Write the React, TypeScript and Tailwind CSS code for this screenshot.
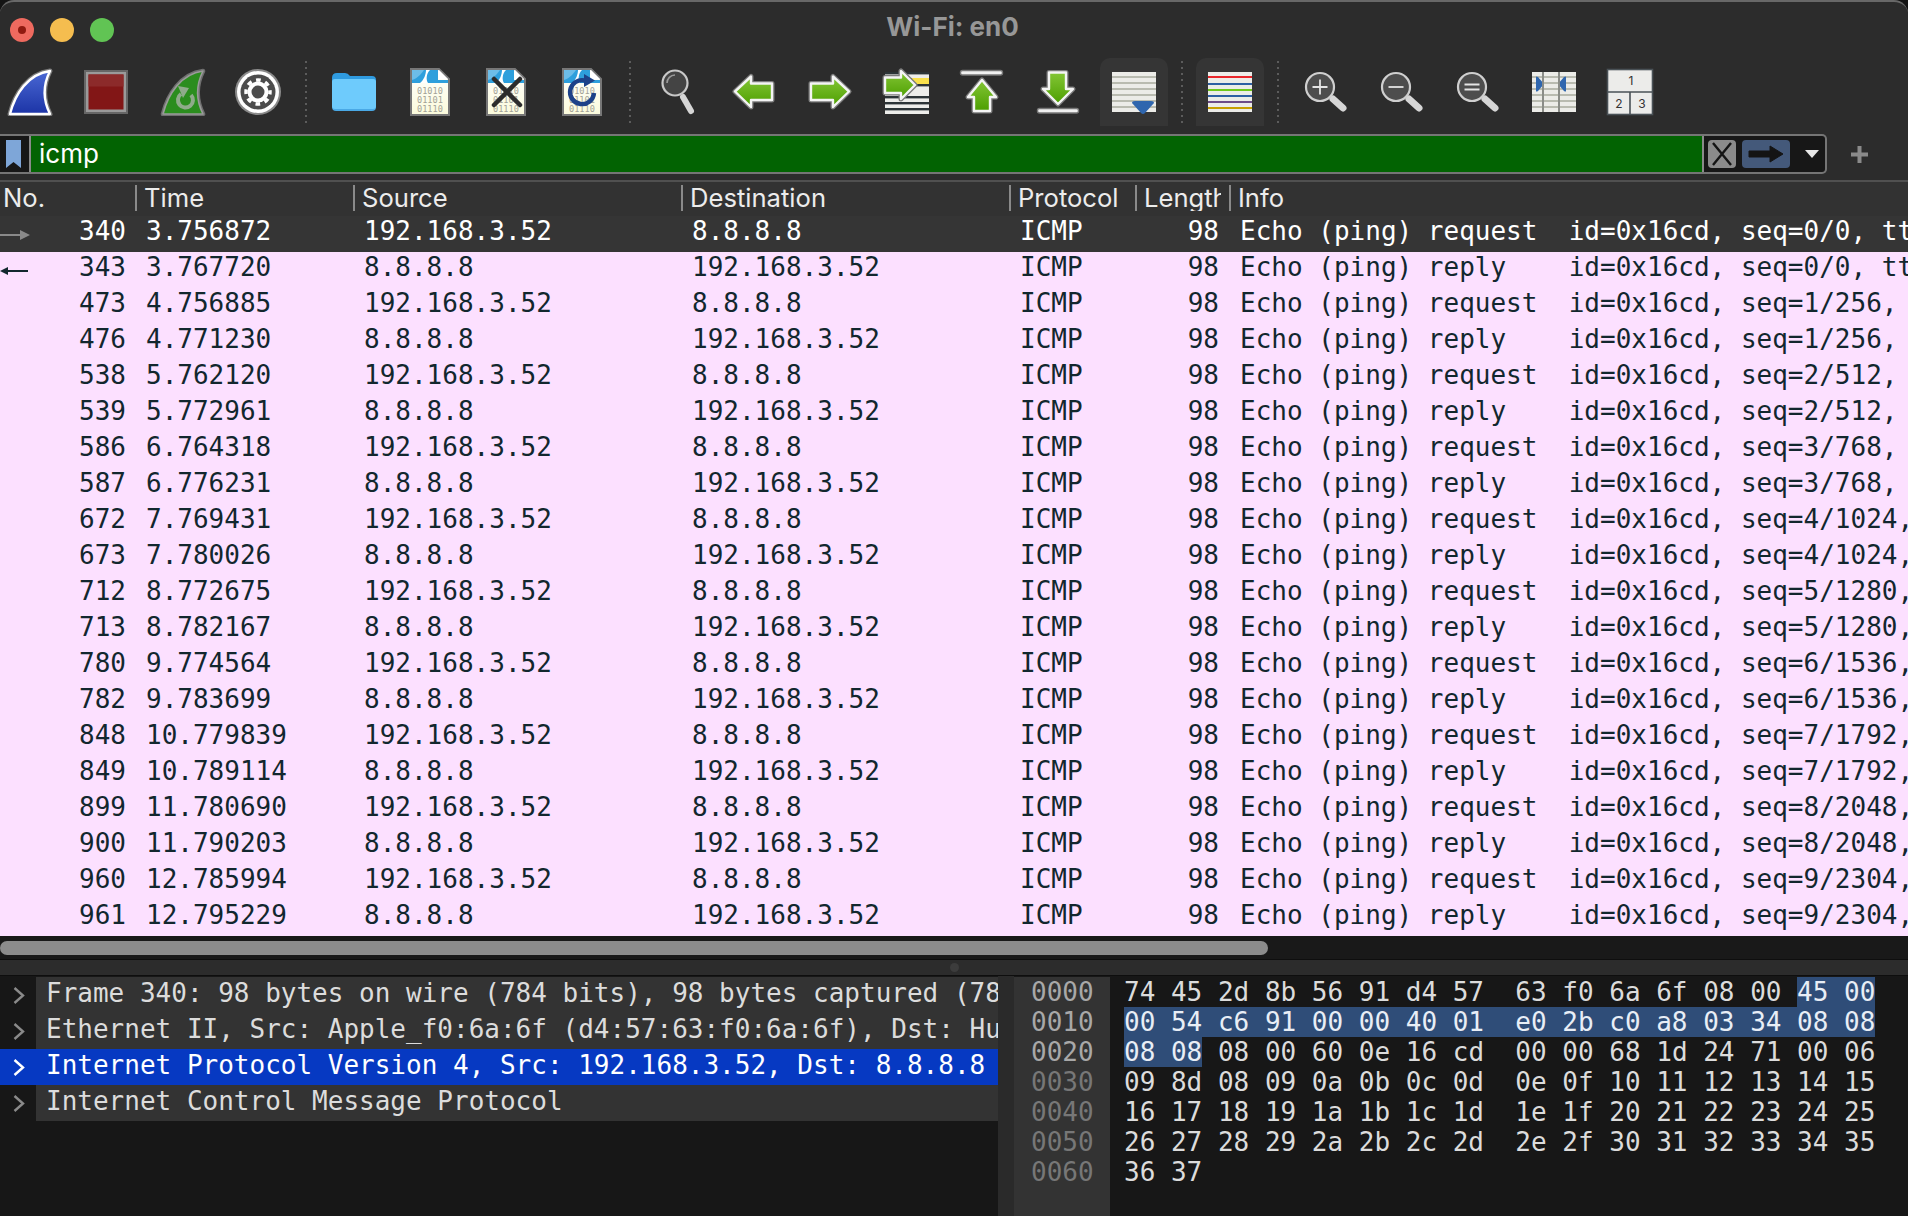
import React from "react";

const IP = "192.168.3.52";
const DNS = "8.8.8.8";
const raw: [string, string, boolean, string][] = [
  ["340", "3.756872", true, "0/0"],
  ["343", "3.767720", false, "0/0"],
  ["473", "4.756885", true, "1/256"],
  ["476", "4.771230", false, "1/256"],
  ["538", "5.762120", true, "2/512"],
  ["539", "5.772961", false, "2/512"],
  ["586", "6.764318", true, "3/768"],
  ["587", "6.776231", false, "3/768"],
  ["672", "7.769431", true, "4/1024"],
  ["673", "7.780026", false, "4/1024"],
  ["712", "8.772675", true, "5/1280"],
  ["713", "8.782167", false, "5/1280"],
  ["780", "9.774564", true, "6/1536"],
  ["782", "9.783699", false, "6/1536"],
  ["848", "10.779839", true, "7/1792"],
  ["849", "10.789114", false, "7/1792"],
  ["899", "11.780690", true, "8/2048"],
  ["900", "11.790203", false, "8/2048"],
  ["960", "12.785994", true, "9/2304"],
  ["961", "12.795229", false, "9/2304"],
];

const S = ({ children }: { children: React.ReactNode }) => (
  <svg width="48" height="48" viewBox="0 0 48 48" className="block shrink-0">
    {children}
  </svg>
);

const Slot = ({ children, active }: { children: React.ReactNode; active?: boolean }) => (
  <div className="w-[76px] h-[68px] shrink-0 flex items-center justify-center">
    {active ? (
      <div className="w-[68px] h-[68px] bg-[#353535] rounded-t-[10px] flex items-center justify-center">{children}</div>
    ) : (
      children
    )}
  </div>
);

const Sep = () => (
  <div className="w-5 h-[68px] shrink-0 flex items-center justify-center">
    <div className="w-[2px] h-[62px] bg-[repeating-linear-gradient(to_bottom,#5c5c5c_0,#5c5c5c_2px,transparent_2px,transparent_6px)]" />
  </div>
);

const Grad = ({ id, a, b }: { id: string; a: string; b: string }) => (
  <defs>
    <linearGradient id={id} x1="0" y1="0" x2="0" y2="1">
      <stop offset="0" stopColor={a} />
      <stop offset="1" stopColor={b} />
    </linearGradient>
  </defs>
);

const GreenPath = ({ id, d }: { id: string; d: string }) => (
  <>
    <Grad id={id} a="#84c636" b="#4c9e00" />
    <path d={d} fill="none" stroke="#7b7b7b" strokeWidth="5" strokeLinejoin="round" />
    <path d={d} fill={`url(#${id})`} stroke="#f4f4f4" strokeWidth="2.4" strokeLinejoin="round" />
  </>
);

const FIN = "M4 46 C9 26 22 6 44 3 C37 17 37 32 44 46 Z";

const FileBase = ({ id }: { id: string }) => (
  <>
    <Grad id={id} a="#ffffff" b="#fbfbdc" />
    <path d="M5 1 H33 L43 11 V47 H5 Z" fill={`url(#${id})`} stroke="#777" strokeWidth="2" />
    <path d="M6 2 H32 V12 H42 V15 H6 Z" fill="#2e9fdc" />
    <path d="M6 2 H18 C15 6 12 10 6 12 Z" fill="#6dbde8" />
    <path d="M24 2 C20 6 20 12 22 15 H14 C18 12 20 6 20 2 Z" fill="#ffffff" />
    <path d="M33 2 L42 11 H33 Z" fill="#ffffff" />
    <g fontFamily="DejaVu Sans Mono" fontSize="8.6" fill="#a2a296">
      <text x="11" y="26">01010</text>
      <text x="11" y="35">01101</text>
      <text x="11" y="44">01110</text>
    </g>
  </>
);

const Lens = ({ children }: { children?: React.ReactNode }) => (
  <S>
    <line x1="31" y1="31" x2="41" y2="40" stroke="#d6d6d6" strokeWidth="7" strokeLinecap="round" />
    <circle cx="18" cy="19" r="14" fill="#4d4d4d" stroke="#cfcfcf" strokeWidth="2.2" />
    {children}
  </S>
);

const Stripes = ({ ys, color = "#b9bbb0" }: { ys: number[]; color?: string }) => (
  <>
    <rect x="2" y="4" width="44" height="40" fill="#ecece8" />
    {ys.map((y) => (
      <rect key={y} x="2" y={y} width="44" height="2" fill={color} />
    ))}
  </>
);

function Icons() {
  return (
    <div className="flex h-[68px] -ml-2">
      <Slot>
        <S>
          <Grad id="fin1" a="#4a68d4" b="#1c34a6" />
          <path d={FIN} fill="none" stroke="#7a7a7a" strokeWidth="5" strokeLinejoin="round" />
          <path d={FIN} fill="url(#fin1)" stroke="#ffffff" strokeWidth="2.4" strokeLinejoin="round" />
        </S>
      </Slot>
      <Slot>
        <S>
          <rect x="2" y="2" width="44" height="44" fill="#666" />
          <rect x="4" y="4" width="40" height="40" fill="#9a9a9a" />
          <rect x="6.5" y="6.5" width="35" height="35" fill="#821616" />
          <rect x="6.5" y="6.5" width="35" height="12" fill="#8c2a2a" />
        </S>
      </Slot>
      <Slot>
        <S>
          <g transform="translate(1 0)">
            <path d={FIN} fill="none" stroke="#6f6f6f" strokeWidth="4.6" strokeLinejoin="round" />
            <path d={FIN} fill="#2b8d1e" stroke="#9a9a9a" strokeWidth="1.6" strokeLinejoin="round" />
          </g>
          <path d="M23 26 A7.5 7.5 0 1 0 33 27" fill="none" stroke="#8fab8a" strokeWidth="4" />
          <path d="M20 18 L31 20 L25 30 Z" fill="#8fab8a" />
        </S>
      </Slot>
      <Slot>
        <S>
          <circle cx="24" cy="24" r="23" fill="#8a8a8a" />
          <circle cx="24" cy="24" r="21" fill="#ffffff" />
          <circle cx="24" cy="24" r="17.5" fill="#4c4c4c" />
          <circle cx="24" cy="24" r="8.5" fill="none" stroke="#fff" strokeWidth="4" />
          <circle cx="24" cy="24" r="12" fill="none" stroke="#fff" strokeWidth="3.5" strokeDasharray="4.7 4.72" strokeDashoffset="2.3" />
        </S>
      </Slot>
      <Sep />
      <Slot>
        <S>
          <path d="M2 10 Q2 5 7 5 H15 Q18 5 20 8 H42 Q46 8 46 12 V20 H2 Z" fill="#2f9be0" />
          <rect x="2" y="11" width="44" height="32" rx="4" fill="#4aa9e6" />
          <rect x="2" y="11" width="44" height="30" rx="3" fill="#6ecbfc" />
        </S>
      </Slot>
      <Slot>
        <S>
          <FileBase id="f1" />
        </S>
      </Slot>
      <Slot>
        <S>
          <FileBase id="f2" />
          <path d="M12 11 L38 37 M38 11 L12 37" stroke="#2c2c2c" strokeWidth="4.5" strokeLinecap="round" />
        </S>
      </Slot>
      <Slot>
        <S>
          <FileBase id="f3" />
          <path d="M27 12.5 A12 12 0 1 0 36 25" fill="none" stroke="#1d4289" strokeWidth="4.4" />
          <path d="M26 6 L37 12.5 L26 19 Z" fill="#1d4289" />
        </S>
      </Slot>
      <Sep />
      <Slot>
        <S>
          <line x1="29" y1="29" x2="37" y2="43" stroke="#d6d6d6" strokeWidth="6" strokeLinecap="round" />
          <circle cx="21" cy="15" r="12.5" fill="#444" stroke="#c8c8c8" strokeWidth="2.2" />
          <path d="M13 15 A8 8 0 0 1 21 7" fill="none" stroke="#9a9a9a" strokeWidth="1.6" />
        </S>
      </Slot>
      <Slot>
        <S>
          <GreenPath id="a1" d="M5 23.5 L21 8.5 L21 15.5 L42 15.5 L42 32 L21 32 L21 39 Z" />
        </S>
      </Slot>
      <Slot>
        <S>
          <GreenPath id="a2" d="M43 23.5 L27 8.5 L27 15.5 L5 15.5 L5 32 L27 32 L27 39 Z" />
        </S>
      </Slot>
      <Slot>
        <S>
          <rect x="3" y="4" width="44" height="42" fill="#ededea" />
          {[4, 16, 28, 34, 40].map((y) => (
            <rect key={y} x="3" y={y} width="44" height="2.4" fill="#2c3437" />
          ))}
          <rect x="3" y="10" width="44" height="2" fill="#2c3437" />
          <rect x="30" y="10" width="17" height="6" fill="#f9e04b" />
          <GreenPath id="a3" d="M33 17 L19 3 L19 9.5 L3 9.5 L3 25 L19 25 L19 31 Z" />
        </S>
      </Slot>
      <Slot>
        <S>
          <rect x="2.5" y="2.5" width="42" height="4.5" rx="2" fill="#f0f0f0" stroke="#777" strokeWidth="1.4" />
          <GreenPath id="a4" d="M24 12 L38 29 L32 29 L32 43 L16 43 L16 29 L10 29 Z" />
        </S>
      </Slot>
      <Slot>
        <S>
          <rect x="3.5" y="40.5" width="41" height="4.5" rx="2" fill="#f0f0f0" stroke="#777" strokeWidth="1.4" />
          <GreenPath id="a5" d="M24 36 L39 21 L32 21 L32 4.5 L15 4.5 L15 21 L9 21 Z" />
        </S>
      </Slot>
      <Slot active>
        <S>
          <Stripes ys={[8, 14, 20, 26, 32, 38]} />
          <path d="M22 35 Q22 33 25 33 H41 Q44 33 44 35 L35 45 Q33 47 31 45 Z" fill="#2f66ae" />
        </S>
      </Slot>
      <Sep />
      <Slot active>
        <S>
          <rect x="2" y="4" width="44" height="40" fill="#ecece8" />
          <rect x="2" y="8" width="44" height="2" fill="#e8262a" />
          <rect x="2" y="15" width="44" height="2" fill="#2d5fa3" />
          <rect x="2" y="21" width="44" height="2" fill="#6fc81a" />
          <rect x="2" y="27" width="44" height="2" fill="#2d5fa3" />
          <rect x="2" y="33" width="44" height="2" fill="#6c4c87" />
          <rect x="2" y="39" width="44" height="2" fill="#c7a000" />
        </S>
      </Slot>
      <Sep />
      <Slot>
        <Lens>
          <path d="M18 11.5 V26.5 M10.5 19 H25.5" stroke="#e4e4e4" strokeWidth="1.8" />
        </Lens>
      </Slot>
      <Slot>
        <Lens>
          <path d="M10.5 19 H25.5" stroke="#e4e4e4" strokeWidth="1.8" />
        </Lens>
      </Slot>
      <Slot>
        <Lens>
          <path d="M10.5 16.5 H25.5 M10.5 21.5 H25.5" stroke="#e4e4e4" strokeWidth="2" />
        </Lens>
      </Slot>
      <Slot>
        <S>
          <Stripes ys={[8, 14, 20, 26, 32, 38]} />
          <path d="M6 9 Q6 8 8 9 L14 16 L8 23 Q6 24 6 23 Z" fill="#2f66ae" />
          <path d="M36 9 Q36 8 34 9 L28 16 L34 23 Q36 24 36 23 Z" fill="#2f66ae" />
          <rect x="12" y="4" width="2" height="40" fill="#8b8d88" />
          <rect x="28" y="4" width="2" height="40" fill="#8b8d88" />
        </S>
      </Slot>
      <Slot>
        <S>
          <rect x="1.5" y="1.5" width="45" height="45" fill="#ececea" stroke="#4a5257" strokeWidth="1.6" />
          <path d="M1.5 24 H46.5 M24 24 V46.5" stroke="#4a5257" strokeWidth="1.6" fill="none" />
          <g fontFamily="Inter" fontSize="12" fill="#333" textAnchor="middle">
            <text x="25" y="17">1</text>
            <text x="13" y="40">2</text>
            <text x="36" y="40">3</text>
          </g>
        </S>
      </Slot>
    </div>
  );
}

function FilterBar() {
  return (
    <div className="flex items-center h-10 mt-2">
      <div className="w-[1827px] h-10 flex border-y-2 border-r-2 border-[#757575] rounded-r-[5px] bg-[#171717]">
        <div className="w-[31px] shrink-0 flex items-center pl-[5px] border-r-2 border-[#8a8a8a]">
          <svg width="17" height="30" viewBox="0 0 17 30">
            <path d="M1 1 H16 V29 L8.5 23 L1 29 Z" fill="#7ea6d8" />
          </svg>
        </div>
        <div className="w-[1673px] shrink-0 bg-[#026302] border-r-2 border-[#8a8a8a] pl-2 text-white text-[26px] leading-[35px] font-['Inter']">
          icmp
        </div>
        <div className="flex items-center pl-[4px]">
          <div className="w-[28px] h-[28px] rounded-[4px] bg-[#8b8b8b] flex items-center justify-center">
            <svg width="22" height="24" viewBox="0 0 22 24">
              <path d="M2 1 L20 23 M20 1 L2 23" stroke="#141414" strokeWidth="2.4" />
            </svg>
          </div>
          <div className="ml-[6px] w-[48px] h-[28px] rounded-[4px] bg-[#44597a] flex items-center justify-center">
            <svg width="36" height="20" viewBox="0 0 36 20">
              <path d="M1 7 H22 V2 L35 10 L22 18 V13 H1 Z" fill="#141414" stroke="#141414" strokeLinejoin="round" />
            </svg>
          </div>
          <svg width="14" height="8" viewBox="0 0 14 8" className="ml-[15px]">
            <path d="M0 0 H14 L7 8 Z" fill="#e8e8e8" />
          </svg>
        </div>
      </div>
      <svg width="17" height="17" viewBox="0 0 17 17" className="ml-6">
        <path d="M8.5 0 V17 M0 8.5 H17" stroke="#8a8a8a" strokeWidth="4" />
      </svg>
    </div>
  );
}

const heads: [string, string, string][] = [
  ["No.", "w-[135px]", "pl-[3px]"],
  ["Time", "w-[218px]", "pl-[7px]"],
  ["Source", "w-[328px]", "pl-[7px]"],
  ["Destination", "w-[328px]", "pl-[7px]"],
  ["Protocol", "w-[126px]", "pl-[7px]"],
  ["Length", "w-[94px]", "pl-[7px]"],
  ["Info", "flex-1", "pl-[7px]"],
];

function Header() {
  return (
    <div className="flex h-9 shrink-0 bg-[#323232] text-[#ececec] text-[25.6px] font-['Inter'] items-center border-t-2 border-[#505050] pb-[2px]">
      {heads.map(([t, w, p], i) => (
        <div key={t} className={`${w} flex items-center h-[26px] ${i ? "border-l-2 border-[#8a8a8a]" : ""}`}>
          <div className={`${p} overflow-hidden whitespace-nowrap leading-[26px] ${t === "Length" ? "w-[84px]" : ""}`}>{t}</div>
        </div>
      ))}
    </div>
  );
}

function Row({ r, i }: { r: (typeof raw)[number]; i: number }) {
  const [no, time, req, seq] = r;
  const selected = i === 0;
  const info = `Echo (ping) ${req ? "request  " : "reply    "}id=0x16cd, seq=${seq}, ttl=${req ? "64" : "117"}`;
  return (
    <div className={`relative flex h-9 shrink-0 leading-[30px] whitespace-pre ${selected ? "bg-[#353535] text-white" : "bg-[#fce0ff] text-[#12272e]"}`}>
      <div className="w-[135px] pr-[9px] text-right">{no}</div>
      <div className="w-[218px] pl-[11px]">{time}</div>
      <div className="w-[328px] pl-[11px]">{req ? IP : DNS}</div>
      <div className="w-[328px] pl-[11px]">{req ? DNS : IP}</div>
      <div className="w-[126px] pl-[11px]">ICMP</div>
      <div className="w-[94px] pr-[10px] text-right">98</div>
      <div className="flex-1 pl-[11px] overflow-hidden">{info}</div>
      {i === 0 && (
        <svg width="30" height="12" viewBox="0 0 30 12" className="absolute left-0 top-[13px]">
          <path d="M0 6 H21" stroke="#8a8a8a" strokeWidth="2" />
          <path d="M20 1 L30 6 L20 11 Z" fill="#8a8a8a" />
        </svg>
      )}
      {i === 1 && (
        <svg width="30" height="10" viewBox="0 0 30 10" className="absolute left-0 top-[14px]">
          <path d="M6 5 H28" stroke="#12272e" strokeWidth="2" />
          <path d="M0 5 L8 1 V9 Z" fill="#12272e" />
        </svg>
      )}
    </div>
  );
}

const tree = [
  "Frame 340: 98 bytes on wire (784 bits), 98 bytes captured (784 bits) on interface en0, id 0",
  "Ethernet II, Src: Apple_f0:6a:6f (d4:57:63:f0:6a:6f), Dst: Hu",
  "Internet Protocol Version 4, Src: 192.168.3.52, Dst: 8.8.8.8",
  "Internet Control Message Protocol",
];

function Tree() {
  return (
    <div className="w-[998px] shrink-0 overflow-hidden pt-px bg-[#171717]">
      {tree.map((t, i) => {
        const sel = i === 2;
        return (
          <div key={t} className={`flex h-9 whitespace-pre leading-[32px] ${sel ? "bg-[#0639c2] text-white" : "text-[#dcdcdc]"}`}>
            <div className="w-9 shrink-0 flex items-center pl-[13px]">
              <svg width="12" height="17" viewBox="0 0 12 17">
                <path d="M1.5 1 L10 8.5 L1.5 16" fill="none" stroke={sel ? "#ffffff" : "#8a8a8a"} strokeWidth="2.4" />
              </svg>
            </div>
            <div className={`flex-1 pl-[10px] overflow-hidden ${sel ? "" : "bg-[#333333]"}`}>{t}</div>
          </div>
        );
      })}
    </div>
  );
}

const hex: [string, string, string, number][] = [
  ["0000", "74 45 2d 8b 56 91 d4 57  63 f0 6a 6f 08 00 ", "45 00", 2],
  ["0010", "", "00 54 c6 91 00 00 40 01  e0 2b c0 a8 03 34 08 08", 1],
  ["0020", " 08 00 60 0e 16 cd  00 00 68 1d 24 71 00 06", "08 08", 0],
  ["0030", "09 8d 08 09 0a 0b 0c 0d  0e 0f 10 11 12 13 14 15", "", 1],
  ["0040", "16 17 18 19 1a 1b 1c 1d  1e 1f 20 21 22 23 24 25", "", 1],
  ["0050", "26 27 28 29 2a 2b 2c 2d  2e 2f 30 31 32 33 34 35", "", 1],
  ["0060", "36 37", "", 1],
];

function Hex() {
  return (
    <div className="flex-1 flex bg-[#171717] min-w-0 pt-px">
      <div className="w-24 shrink-0 bg-[#333333] pl-[17px] leading-[30px]">
        {hex.map(([o], i) => (
          <div key={o} className={i < 3 ? "text-[#a8a8a8]" : "text-[#777777]"}>
            {o}
          </div>
        ))}
      </div>
      <div className="flex-1 pl-[14px] leading-[30px] whitespace-pre text-[#dcdcdc]">
        {hex.map(([o, plain, hl, mode]) => (
          <div key={o} className="h-[30px]">
            {mode === 0 ? (
              <>
                <span className="bg-[#2f4d78] text-[#e8eef6]">{hl}</span>
                {plain}
              </>
            ) : (
              <>
                {plain}
                {hl && <span className="bg-[#2f4d78] text-[#e8eef6]">{hl}</span>}
              </>
            )}
          </div>
        ))}
      </div>
    </div>
  );
}

export default function App() {
  return (
    <div className="w-[1908px] h-[1216px] overflow-hidden bg-[#141414] flex flex-col font-['DejaVu_Sans_Mono'] text-[26px]">
      <div className="h-[180px] shrink-0 bg-[#2c2c2c] rounded-t-[14px] border-t-2 border-[#686868] flex flex-col">
        <div className="relative h-[56px] flex items-center pl-[10px] gap-4">
          <div className="w-6 h-[24px] rounded-full bg-[#ee6a5f] flex items-center justify-center">
            <div className="w-2 h-2 rounded-full bg-[#8f1a10]" />
          </div>
          <div className="w-6 h-[24px] rounded-full bg-[#f5bd4f]" />
          <div className="w-6 h-[24px] rounded-full bg-[#61c454]" />
          <div className="absolute inset-x-0 top-[9px] text-center text-[26px] leading-[32px] font-bold text-[#979797] font-['Inter'] pr-[3px]">
            Wi-Fi: en0
          </div>
        </div>
        <Icons />
        <FilterBar />
      </div>
      <Header />
      <div className="flex flex-col shrink-0">
        {raw.map((r, i) => (
          <Row key={r[0]} r={r} i={i} />
        ))}
      </div>
      <div className="h-[23px] shrink-0 bg-[#191919] pt-[5px]">
        <div className="w-[1268px] h-[14px] rounded-full bg-[#8c8c8c]" />
      </div>
      <div className="h-[17px] shrink-0 bg-[#2c2c2c] border-y border-[#0e0e0e] flex items-center justify-center">
        <div className="w-[9px] h-[9px] rounded-full bg-[#3c3c3c]" />
      </div>
      <div className="flex-1 flex min-h-0">
        <Tree />
        <div className="w-4 shrink-0 bg-[#2a2a2a]" />
        <Hex />
      </div>
    </div>
  );
}
